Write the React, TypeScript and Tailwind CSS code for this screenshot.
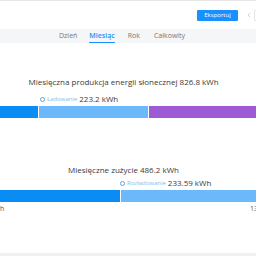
import { ChevronLeft } from "lucide-react";

const tabs = ["Dzień", "Miesiąc", "Rok", "Całkowity"];

function Legend({ label, value, pad }: { label: string; value: string; pad: string }) {
  return (
    <div className={`flex h-[10px] items-center ${pad}`}>
      <span className="h-[5px] w-[5px] rounded-full border-[1.5px] border-[#5aa3e0]" />
      <span className="ml-[2px] text-[6px] text-[#86c0ea]">{label}</span>
      <span className="ml-[2px] text-[8px] text-[#3a3a3a]">{value}</span>
    </div>
  );
}

export default function App() {
  return (
    <div className="flex h-[256px] w-[256px] flex-col overflow-hidden bg-white font-['Open_Sans',sans-serif] leading-none">
      <div className="flex h-[29px] shrink-0 items-center border-t border-[#e6e6e6] pl-[197px]">
        <button
          type="button"
          className="flex h-[11px] w-[41px] shrink-0 items-center justify-center rounded-[1px] bg-[#1890ff] text-[6px] text-white"
        >
          Eksportuj
        </button>
        <ChevronLeft className="ml-[7px] h-[8px] w-[8px] shrink-0 text-[#aaa]" strokeWidth={1.5} />
        <div className="ml-[1px] h-[11px] w-[20px] shrink-0 rounded-[1px] border border-[#e4e4e4]" />
      </div>

      <div className="flex h-[14px] shrink-0 items-stretch bg-[#f5f6f8] pl-[59px] text-[7px] text-[#777]">
        {tabs.map((t, i) => (
          <div
            key={t}
            className={`flex items-center border-b-[1.5px] ${
              i === 1 ? "border-[#1890ff] font-semibold text-[#1890ff]" : "border-transparent"
            } ${i === 0 ? "" : i === 1 ? "ml-[12px]" : i === 2 ? "ml-[13px]" : "ml-[14px]"}`}
          >
            {t}
          </div>
        ))}
      </div>

      <div className="mt-[33px] w-[247px] text-center text-[8px] leading-[11px] text-[#3a3a3a]">
        Miesięczna produkcja energii słonecznej 826.8 kWh
      </div>
      <Legend label="Ładowanie" value="223.2 kWh" pad="mt-[7px] pl-[40px]" />
      <div className="mt-[2px] flex h-[12px] shrink-0">
        <div className="w-[38px] bg-[#0a8cf5]" />
        <div className="ml-[1px] w-[109px] bg-[#6bb8fb]" />
        <div className="ml-[1px] flex-1 bg-[#9c5ad6]" />
      </div>

      <div className="mt-[46px] w-[247px] text-center text-[8px] leading-[11px] text-[#3a3a3a]">
        Miesięczne zużycie 486.2 kWh
      </div>
      <Legend label="Rozładowanie" value="233.59 kWh" pad="mt-[3px] pl-[120px]" />
      <div className="mt-[2px] flex h-[12px] shrink-0">
        <div className="w-[120px] bg-[#0a8cf5]" />
        <div className="ml-[1px] flex-1 bg-[#6bb8fb]" />
      </div>
      <div className="mt-[2px] flex h-[9px] items-center text-[7px] text-[#555]">
        <span>h</span>
        <span className="ml-auto w-[6px] whitespace-nowrap">130.6 kWh</span>
      </div>

      <div className="mt-auto h-[3px] shrink-0 bg-[#eef0f3]" />
    </div>
  );
}
